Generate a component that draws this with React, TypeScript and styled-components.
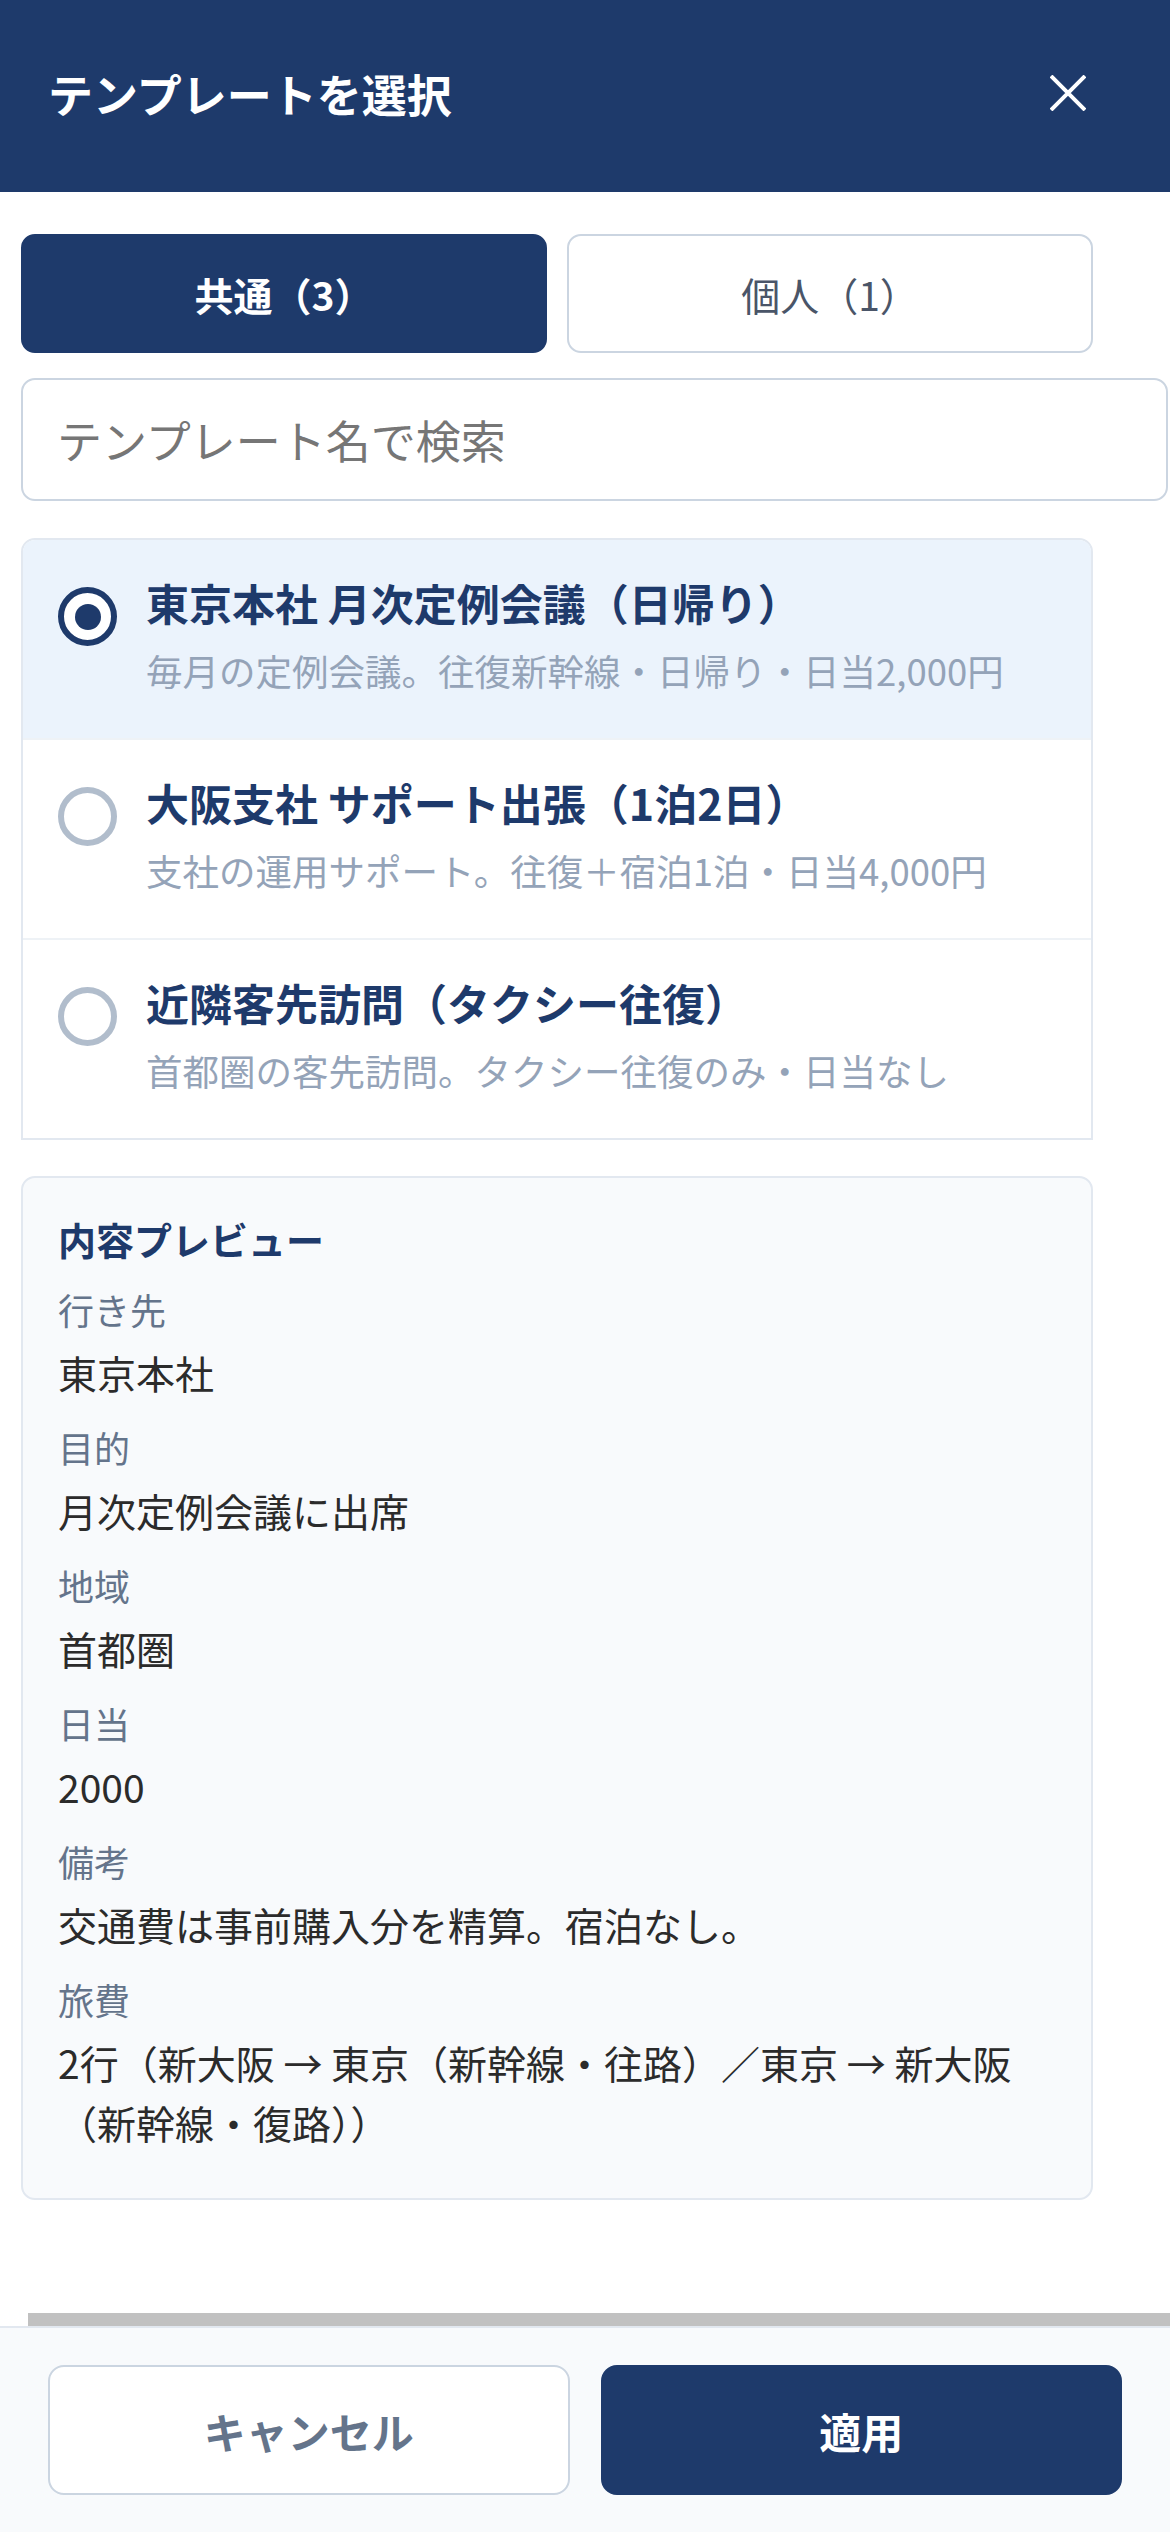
import styled, { createGlobalStyle } from 'styled-components';

const GlobalStyle = createGlobalStyle`
  html, body {
    margin: 0;
    padding: 0;
    background: #ffffff;
  }
  body {
    font-family: "Noto Sans CJK JP", "Noto Sans", sans-serif;
  }
  * {
    box-sizing: border-box;
  }
`;

const colors = {
  navy: '#1e3a6b',
  border: '#cbd5e1',
  softBorder: '#e2e8f0',
  slate: '#64748b',
  muted: '#94a3b8',
  text: '#2b2b2b',
  panel: '#f8fafc',
  selected: '#ebf3fc',
};

const Page = styled.div`
  display: flex;
  flex-direction: column;
  min-height: 100vh;
  width: 1170px;
  overflow: hidden;
`;

const Header = styled.header`
  display: flex;
  align-items: center;
  justify-content: space-between;
  height: 192px;
  padding: 0 54px 6px 48px;
  background: ${colors.navy};
`;

const HeaderTitle = styled.h1`
  margin: 0;
  font-size: 45px;
  font-weight: 700;
  color: #ffffff;
`;

const CloseButton = styled.button`
  display: flex;
  align-items: center;
  justify-content: center;
  width: 96px;
  height: 96px;
  padding: 0;
  border: none;
  background: transparent;
`;

const Body = styled.main`
  flex: 1;
  display: flex;
  flex-direction: column;
  padding: 42px 0 0 21px;
`;

const Tabs = styled.div`
  display: grid;
  grid-template-columns: 1fr 1fr;
  gap: 20px;
  width: 1072px;
  margin-bottom: 25px;
`;

const Tab = styled.button<{ $active?: boolean }>`
  height: 119px;
  border-radius: 14px;
  font-family: inherit;
  font-size: 39px;
  font-weight: ${({ $active }) => ($active ? 700 : 400)};
  color: ${({ $active }) => ($active ? '#ffffff' : '#4a5568')};
  background: ${({ $active }) => ($active ? colors.navy : '#ffffff')};
  border: 2px solid ${({ $active }) => ($active ? colors.navy : colors.border)};
`;

const Search = styled.input`
  width: 1147px;
  height: 123px;
  padding: 0 34px;
  border: 2px solid ${colors.border};
  border-radius: 14px;
  font-family: inherit;
  font-size: 45px;
  color: ${colors.text};
  margin-bottom: 37px;
  &::placeholder {
    color: #767676;
  }
`;

const List = styled.ul`
  width: 1072px;
  margin: 0 0 36px 0;
  padding: 0;
  list-style: none;
  border: 2px solid ${colors.softBorder};
  border-radius: 14px 14px 0 0;
  overflow: hidden;
`;

const Item = styled.li<{ $selected?: boolean }>`
  display: flex;
  align-items: flex-start;
  gap: 29px;
  padding: 33px 35px 40px;
  background: ${({ $selected }) => ($selected ? colors.selected : '#ffffff')};
  & + & {
    border-top: 2px solid #eef2f6;
  }
`;

const Radio = styled.span<{ $checked?: boolean }>`
  flex: none;
  display: flex;
  align-items: center;
  justify-content: center;
  width: 59px;
  height: 59px;
  margin-top: 14px;
  border-radius: 50%;
  background: #ffffff;
  border: 6px solid ${({ $checked }) => ($checked ? colors.navy : '#b1bdcc')};
  &::after {
    content: '';
    display: ${({ $checked }) => ($checked ? 'block' : 'none')};
    width: 26px;
    height: 26px;
    border-radius: 50%;
    background: ${colors.navy};
  }
`;

const ItemText = styled.div`
  display: flex;
  flex-direction: column;
  gap: 12px;
`;

const ItemTitle = styled.div`
  font-size: 43px;
  line-height: 59px;
  font-weight: 700;
  color: ${colors.navy};
`;

const ItemNote = styled.div`
  font-size: 36.5px;
  line-height: 54px;
  color: ${colors.muted};
`;

const Preview = styled.section`
  width: 1072px;
  padding: 32px 35px 46px;
  background: ${colors.panel};
  border: 2px solid ${colors.softBorder};
  border-radius: 14px;
`;

const PreviewTitle = styled.h2`
  margin: 0 0 14px 0;
  font-size: 38px;
  line-height: 58px;
  font-weight: 700;
  color: ${colors.navy};
`;

const Fields = styled.dl`
  display: flex;
  flex-direction: column;
  gap: 18px;
  margin: 0;
`;

const Field = styled.div`
  display: flex;
  flex-direction: column;
  gap: 6px;
`;

const Label = styled.dt`
  font-size: 36px;
  line-height: 54px;
  color: ${colors.slate};
`;

const Value = styled.dd`
  margin: 0;
  font-size: 39px;
  line-height: 60px;
  color: ${colors.text};
`;

const ScrollThumb = styled.div`
  height: 13px;
  margin: auto 0 0 7px;
  background: #c1c1c1;
`;

const Footer = styled.footer`
  display: grid;
  grid-template-columns: 1fr 1fr;
  gap: 31px;
  padding: 37px 48px;
  background: ${colors.panel};
  border-top: 2px solid ${colors.softBorder};
`;

const FooterButton = styled.button<{ $primary?: boolean }>`
  height: 130px;
  border-radius: 16px;
  font-family: inherit;
  font-size: 42px;
  font-weight: 700;
  color: ${({ $primary }) => ($primary ? '#ffffff' : colors.slate)};
  background: ${({ $primary }) => ($primary ? colors.navy : '#ffffff')};
  border: 2px solid ${({ $primary }) => ($primary ? colors.navy : colors.border)};
`;

const templates = [
  {
    title: '東京本社 月次定例会議（日帰り）',
    note: '毎月の定例会議。往復新幹線・日帰り・日当2,000円',
  },
  {
    title: '大阪支社 サポート出張（1泊2日）',
    note: '支社の運用サポート。往復＋宿泊1泊・日当4,000円',
  },
  {
    title: '近隣客先訪問（タクシー往復）',
    note: '首都圏の客先訪問。タクシー往復のみ・日当なし',
  },
];

const previewFields = [
  { label: '行き先', value: '東京本社' },
  { label: '目的', value: '月次定例会議に出席' },
  { label: '地域', value: '首都圏' },
  { label: '日当', value: '2000' },
  { label: '備考', value: '交通費は事前購入分を精算。宿泊なし。' },
  {
    label: '旅費',
    value: '2行（新大阪 → 東京（新幹線・往路）／東京 → 新大阪（新幹線・復路））',
  },
];

const App = () => {
  const selected = 0;

  return (
    <Page>
      <GlobalStyle />
      <Header>
        <HeaderTitle>テンプレートを選択</HeaderTitle>
        <CloseButton aria-label="閉じる">
          <svg width="36" height="36" viewBox="0 0 36 36">
            <path d="M1 1L35 35M35 1L1 35" stroke="#ffffff" strokeWidth="4" />
          </svg>
        </CloseButton>
      </Header>

      <Body>
        <Tabs>
          <Tab $active>共通（3）</Tab>
          <Tab>個人（1）</Tab>
        </Tabs>
        <Search type="text" placeholder="テンプレート名で検索" />

        <List>
          {templates.map((t, i) => (
            <Item key={t.title} $selected={i === selected}>
              <Radio $checked={i === selected} />
              <ItemText>
                <ItemTitle>{t.title}</ItemTitle>
                <ItemNote>{t.note}</ItemNote>
              </ItemText>
            </Item>
          ))}
        </List>

        <Preview>
          <PreviewTitle>内容プレビュー</PreviewTitle>
          <Fields>
            {previewFields.map((f) => (
              <Field key={f.label}>
                <Label>{f.label}</Label>
                <Value>{f.value}</Value>
              </Field>
            ))}
          </Fields>
        </Preview>

        <ScrollThumb />
      </Body>

      <Footer>
        <FooterButton>キャンセル</FooterButton>
        <FooterButton $primary>適用</FooterButton>
      </Footer>
    </Page>
  );
};

export default App;
